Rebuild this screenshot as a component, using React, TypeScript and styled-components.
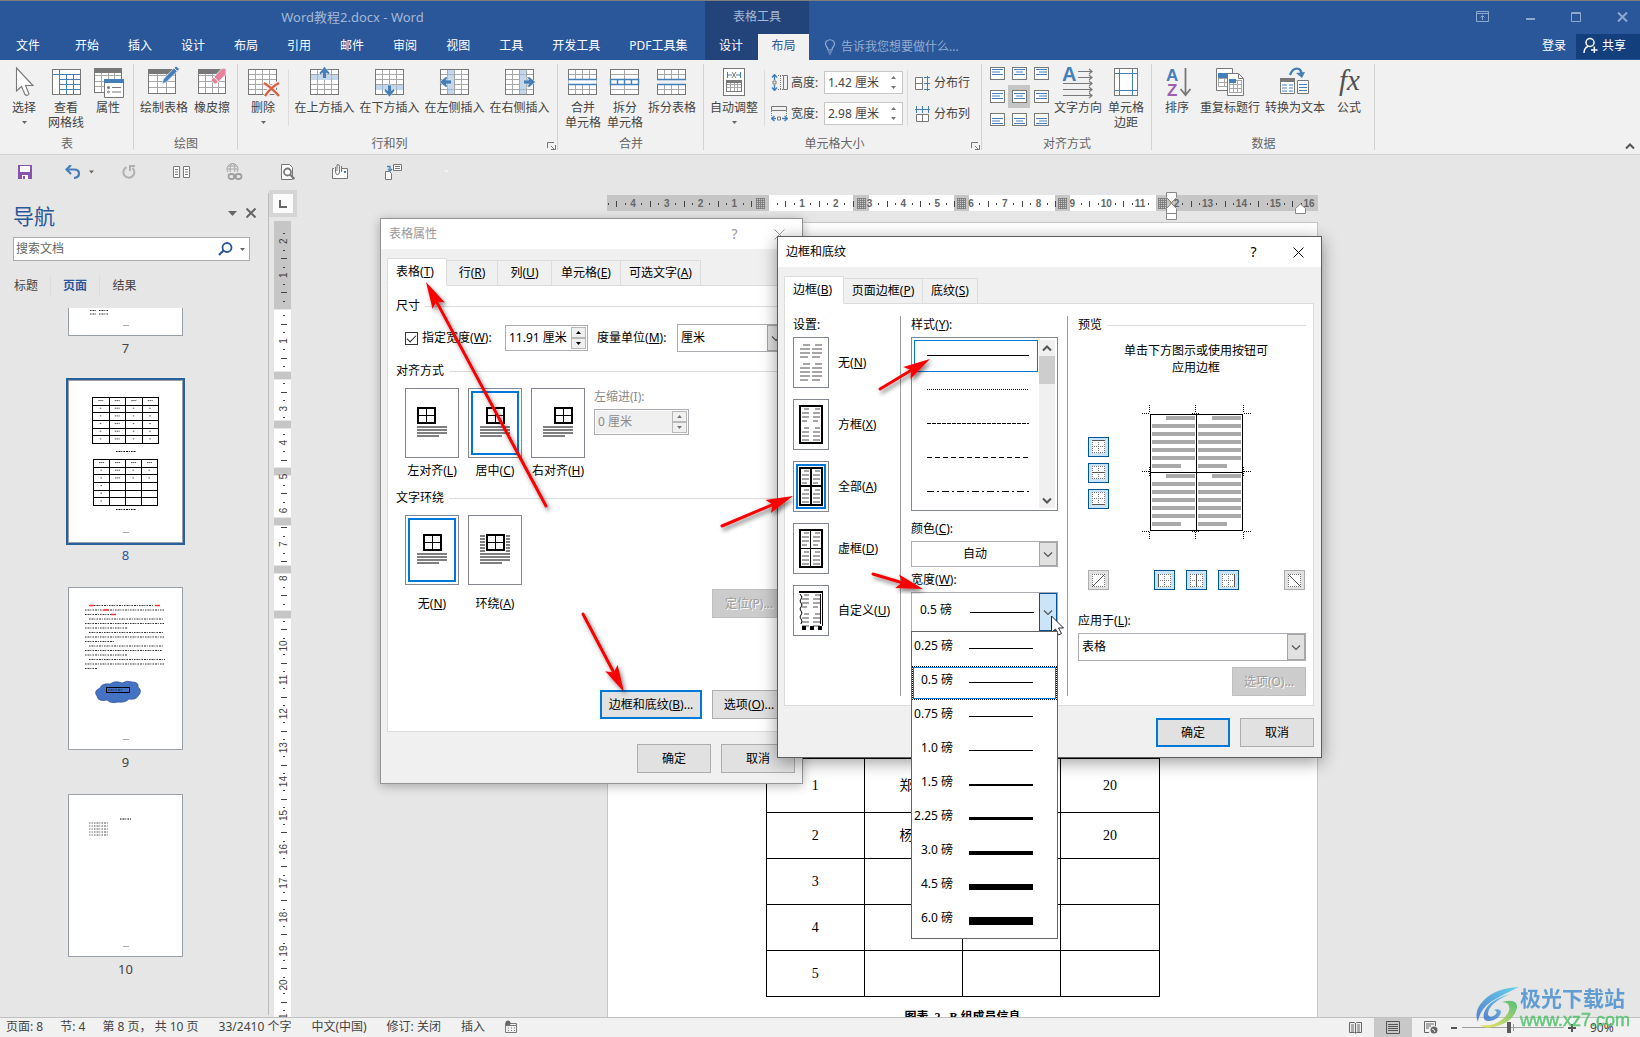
import React from "react";
import styled, { createGlobalStyle, css } from "styled-components";

const SANS = '"Noto Sans", "Noto Sans CJK SC", sans-serif';
const SERIF = '"Liberation Serif", "Noto Sans CJK SC", serif';
const BLUE = "#2a579a";
const ICON_GREY = "#787878";
const ICON_BLUE = "#447fb9";

const GlobalStyle = createGlobalStyle`
  *, *::before, *::after { box-sizing: border-box; }
  body { margin: 0; font: 12px/18px ${SANS}; color: #444; background: #e6e6e6; }
  button, input, select { font: inherit; color: inherit; margin: 0; padding: 0; border: 0; background: none; border-radius: 0; outline: 0; }
  button { white-space: nowrap; }
  select { appearance: none; }
  svg { display: block; flex: none; }
  ul { list-style: none; margin: 0; padding: 0; }
`;

const Shell = styled.div`
  position: relative;
  display: flex;
  flex-direction: column;
  height: 100vh;
  overflow: hidden;
  border-top: 1px solid #7e7e7e;
`;

/* ---------- header ---------- */
const Header = styled.header`
  display: grid;
  grid-template: 33px 26px / 705px 104px 1fr;
  background: ${BLUE};
  color: #fff;
`;
const DocTitle = styled.div<{ $ctx?: boolean }>`
  line-height: 32px;
  text-align: center;
  font-size: ${(p) => (p.$ctx ? 12 : 13)}px;
  color: #a5b8d6;
  background: ${(p) => (p.$ctx ? "#22447a" : "none")};
`;
const TabStrip = styled.nav<{ $ctx?: boolean }>`
  display: flex;
  background: ${(p) => (p.$ctx ? "#22447a" : "none")};
`;
const RibbonTab = styled.button<{ $active?: boolean; $file?: boolean }>`
  padding: 0 14px 2px;
  margin-right: 1px;
  line-height: 22px;
  ${(p) => p.$file && css`padding: 0 16px 2px; margin-right: 5px;`}
  ${(p) => p.$active && css`flex: 1; margin: 0; padding: 0 0 2px; background: #f1f1f1; color: ${BLUE};`}
`;
const WindowButtons = styled.div`
  display: flex;
  justify-content: flex-end;
  align-items: center;
  gap: 30px;
  padding: 0 10px 2px;
  color: #8fa8ce;
`;
const TabRight = styled.div`
  display: flex;
  align-items: stretch;
`;
const TellMe = styled.button`
  display: flex;
  align-items: center;
  gap: 5px;
  padding-left: 15px;
  margin-right: auto;
  color: #93abd0;
`;
const SignIn = styled.button`
  padding: 0 10px 2px;
  line-height: 22px;
`;
const Share = styled.button`
  display: flex;
  align-items: center;
  gap: 4px;
  width: 64px;
  padding: 0 0 2px 7px;
  margin-bottom: 1px;
  background: #133f7c;
  line-height: 20px;
`;

/* ---------- ribbon ---------- */
const Ribbon = styled.section`
  display: flex;
  height: 95px;
  background: #f1f1f1;
  border-bottom: 1px solid #d2d2d2;
`;
const Group = styled.div<{ $w: number }>`
  display: flex;
  flex-direction: column;
  justify-content: space-between;
  width: ${(p) => p.$w}px;
  padding-bottom: 1px;
  background: linear-gradient(#d2d2d2, #d2d2d2) no-repeat right 4px / 1px 86px;
`;
const GroupBody = styled.div`
  display: flex;
  padding-left: 4px;
`;
const GroupFoot = styled.div`
  display: flex;
  align-items: center;
  color: #666;
`;
const GroupName = styled.span`
  flex: 1;
  text-align: center;
`;
const Launcher = styled.button`
  width: 17px;
  padding: 5px 0 0 9px;
`;
const BigButton = styled.button<{ $w: number }>`
  display: flex;
  flex-direction: column;
  align-items: center;
  width: ${(p) => p.$w}px;
  padding-top: 6px;
  line-height: 15px;
`;
const BigLabel = styled.span`
  margin-top: 4px;
  min-height: 15px;
`;
const DownMark = styled.span`
  display: flex;
  align-items: center;
  height: 15px;
`;
const InnerRule = styled.span`
  width: 1px;
  height: 56px;
  margin: 10px 3px 0 4px;
  background: #dcdcdc;
`;
const SizeColumn = styled.div`
  display: flex;
  flex-direction: column;
  gap: 8px;
  padding: 11px 0 0 3px;
`;
const SizeRow = styled.div`
  display: flex;
  align-items: center;
  gap: 3px;
  height: 23px;
`;
const SizeLabel = styled.label`
  width: 30px;
  white-space: nowrap;
`;
const PlainButton = styled.button`
  display: flex;
  align-items: center;
  gap: 3px;
  height: 23px;
`;
const AlignGrid = styled.div`
  display: grid;
  grid-template-columns: repeat(3, 22px);
  grid-auto-rows: 23px;
  padding-top: 2px;
`;
const AlignCell = styled.button<{ $on?: boolean }>`
  display: grid;
  place-items: center;
  background: ${(p) => (p.$on ? "#c5c5c5" : "none")};
`;
const RibbonEnd = styled.div`
  display: flex;
  flex: 1;
  align-items: flex-end;
  justify-content: flex-end;
  padding: 0 5px 4px;
`;

const QuickBar = styled.div`
  display: flex;
  align-items: center;
  height: 33px;
  margin-bottom: -1px;
`;
const QuickButton = styled.button<{ $first?: boolean; $split?: boolean }>`
  display: flex;
  align-items: center;
  justify-content: center;
  width: ${(p) => (p.$first ? 49 : 53)}px;
  padding-left: ${(p) => (p.$split ? 9 : 0)}px;
`;

/* ---------- spin box and drop-down ---------- */
const SpinBox = styled.span<{ $w: number; $h: number; $flat?: boolean; $off?: boolean }>`
  display: flex;
  width: ${(p) => p.$w}px;
  height: ${(p) => p.$h}px;
  padding: 1px;
  border: 1px solid ${(p) => (p.$flat ? "#c6c6c6" : "#abadb3")};
  background: #fff;
  color: ${(p) => (p.$off ? "#8a8a8a" : p.$flat ? "#444" : "#000")};
  input { flex: 1; min-width: 0; padding-left: 2px; background: ${(p) => (p.$off ? "#f0f0f0" : "none")}; }
`;
const SpinButtons = styled.span<{ $flat?: boolean }>`
  display: flex;
  flex-direction: column;
  width: 15px;
  button { display: grid; flex: 1; place-items: center; ${(p) => !p.$flat && css`background: #f0f0f0; border: 1px solid #b8b8b8;`} }
`;
const DropBox = styled.span<{ $h: number; $hot?: boolean }>`
  position: relative;
  display: grid;
  grid-template-columns: 1fr 18px;
  height: ${(p) => p.$h}px;
  border: 1px solid #abadb3;
  background: #fff;
  color: #000;
  select { grid-area: 1 / 1 / 2 / 3; width: 100%; padding: 0 22px 0 3px; cursor: default; }
`;
const CenteredDrop = styled(DropBox)`
  select { text-align-last: center; }
`;
const DropArrow = styled.span<{ $hot?: boolean }>`
  grid-area: 1 / 2;
  display: grid;
  place-items: center;
  pointer-events: none;
  background: ${(p) => (p.$hot ? "#cce4f7" : "#e1e1e1")};
  border: 1px solid ${(p) => (p.$hot ? "#005499" : "#a5a5a5")};
`;

/* ---------- work area ---------- */
const Work = styled.main`
  display: flex;
  flex: 1;
  min-height: 0;
`;
const NavPane = styled.aside`
  display: flex;
  flex-direction: column;
  width: 269px;
  margin: 6px 0 2px;
  padding-top: 7px;
  border-right: 1px solid #bcbcbc;
`;
const NavHead = styled.div`
  display: flex;
  align-items: center;
  gap: 9px;
  padding: 0 12px 0 13px;
  height: 32px;
  button { padding-bottom: 6px; }
`;
const NavTitle = styled.h2`
  margin: 0 auto 0 0;
  font-size: 21px;
  font-weight: 400;
  color: ${BLUE};
`;
const SearchBox = styled.div`
  display: flex;
  align-items: center;
  gap: 7px;
  height: 24px;
  margin: 5px 18px 15px 13px;
  padding: 0 4px 0 2px;
  border: 1px solid #ababab;
  background: #fff;
  input { flex: 1; min-width: 0; }
  input::placeholder { color: #666; opacity: 1; }
`;
const NavTabs = styled.div`
  display: flex;
  height: 20px;
  margin-bottom: 12px;
  padding-left: 2px;
`;
const NavTab = styled.button<{ $on?: boolean }>`
  width: 49px;
  border-right: 1px solid #dcdcdc;
  color: ${(p) => (p.$on ? BLUE : "#444")};
  font-weight: ${(p) => (p.$on ? 700 : 400)};
  &:last-child { border: 0; }
`;
const ThumbView = styled.div`
  flex: 1;
  min-height: 0;
  overflow: hidden;
`;
const ThumbList = styled.ul`
  margin-top: -135px;
  padding-right: 17px;
`;
const ThumbItem = styled.li<{ $on?: boolean }>`
  display: flex;
  flex-direction: column;
  align-items: center;
  height: 207px;
  font-size: 13px;
  line-height: 24px;
  color: ${(p) => (p.$on ? BLUE : "#444")};
  button { height: 163px; width: 115px; border: 1px solid #9aa0aa; background: #fff; ${(p) => p.$on && css`outline: 2px solid #2a6099;`} }
`;
const RulerColumn = styled.div`
  display: flex;
  flex-direction: column;
  width: 28px;
  padding-top: 3px;
`;
const TabSelector = styled.button`
  display: grid;
  place-items: center;
  height: 27px;
  border: 4px solid #d5d5d5;
  background: #fbfbfb;
`;
const VRulerBox = styled.div`
  flex: 1;
  min-height: 0;
  margin: 4px 0 0 5px;
  overflow: hidden;
`;
const DocArea = styled.div`
  display: flex;
  flex: 1;
  flex-direction: column;
  align-items: center;
  padding: 8px 12px 0 0;
  min-width: 0;
`;
const Page = styled.article`
  flex: 1;
  min-height: 0;
  width: 711px;
  margin-top: 11px;
  padding-top: 535px;
  overflow: hidden;
  background: #fff;
  border: 1px solid #c6c6c6;
  border-bottom: 0;
  font-family: ${SERIF};
  color: #000;
`;
const DocTable = styled.table`
  width: 394px;
  margin: 0 auto;
  border-collapse: collapse;
  table-layout: fixed;
  font-size: 14px;
  td { height: 46px; padding: 0; border: 1px solid #000; text-align: center; }
  tr:first-child td { height: 54px; }
`;
const Caption = styled.p`
  margin: 11px 0 0;
  text-align: center;
  font-size: 12px;
  font-weight: 700;
  white-space: pre;
`;

/* ---------- status bar ---------- */
const StatusBar = styled.footer`
  display: flex;
  height: 20px;
  border-top: 1px solid #c0c0c0;
  background: #f1f1f1;
  padding: 0 22px 0 6px;
  line-height: 18px;
`;
const StatusItems = styled.div`
  display: flex;
  gap: 20px;
  margin-right: auto;
  white-space: nowrap;
  span:nth-child(-n + 2) { margin-right: -3px; }
`;
const ViewButton = styled.button<{ $on?: boolean }>`
  display: grid;
  place-items: center;
  width: 38px;
  background: ${(p) => (p.$on ? "#c8c8c8" : "none")};
`;
const ZoomButton = styled.button`
  display: grid;
  place-items: center;
  width: 8px;
`;
const ZoomRange = styled.input`
  appearance: none;
  width: 102px;
  margin: 0 4px;
  background: linear-gradient(#999, #999) no-repeat 51px center / 1px 7px, linear-gradient(#a0a0a0, #a0a0a0) no-repeat 0 center / 100% 1px;
  &::-webkit-slider-thumb { appearance: none; width: 4px; height: 11px; background: #5c5c5c; }
`;
const ZoomValue = styled.button`
  width: 28px;
  margin-left: 14px;
  text-align: left;
`;

/* ---------- dialogs ---------- */
const Dialog = styled.section<{ $x: number; $y: number; $w: number; $front?: boolean }>`
  position: absolute;
  left: ${(p) => p.$x}px;
  top: ${(p) => p.$y - 1}px;
  width: ${(p) => p.$w}px;
  border: 1px solid ${(p) => (p.$front ? "#5e5e5e" : "#949494")};
  background: #f0f0f0;
  color: #000;
  box-shadow: ${(p) => (p.$front ? "0 4px 16px rgba(0,0,0,.4)" : "0 2px 10px rgba(0,0,0,.28)")};
`;
const DialogBar = styled.div<{ $front?: boolean }>`
  display: flex;
  align-items: center;
  height: 30px;
  padding: 0 15px 0 8px;
  background: #fff;
  color: ${(p) => (p.$front ? "#000" : "#999")};
  font-size: 12px;
`;
const DialogTitle = styled.h3`
  margin: 0 auto 0 0;
  font-size: 12px;
  font-weight: 400;
`;
const BarButton = styled.button`
  display: grid;
  place-items: center;
  width: 45px;
  height: 18px;
  font-size: 14px;
  &:last-child { width: 16px; margin-left: 14px; }
`;
const DialogBody = styled.div`
  padding: 9px 7px 10px 6px;
`;
const DialogTabs = styled.div`
  display: flex;
  align-items: flex-end;
  height: 28px;
  margin-bottom: -1px;
`;
const DialogTab = styled.button<{ $w: number; $on?: boolean }>`
  width: ${(p) => p.$w}px;
  height: ${(p) => (p.$on ? 28 : 26)}px;
  border: 1px solid #dcdcdc;
  border-left-width: ${(p) => (p.$on ? 1 : 0)}px;
  ${(p) => p.$on && css`position: relative; background: #fff; border-bottom-color: #fff; padding: 0 6px 0 8px; text-align: left;`}
`;
const Panel = styled.div<{ $cols?: boolean }>`
  display: flex;
  flex-direction: ${(p) => (p.$cols ? "row" : "column")};
  padding: ${(p) => (p.$cols ? "12px 7px 9px 0" : "11px 8px 12px")};
  border: 1px solid #dcdcdc;
  background: #fff;
`;
const Legend = styled.div<{ $top?: number }>`
  display: flex;
  align-items: center;
  gap: 5px;
  margin-top: ${(p) => p.$top ?? 0}px;
  &::after { content: ""; flex: 1; height: 1px; background: #dcdcdc; }
`;
const FieldRow = styled.div`
  display: flex;
  align-items: center;
  margin: 9px 0 1px 9px;
  height: 28px;
  white-space: nowrap;
`;
const CheckLabel = styled.label`
  display: flex;
  align-items: center;
  gap: 4px;
  width: 100px;
`;
const CheckBox = styled.input`
  appearance: none;
  width: 13px;
  height: 13px;
  border: 1px solid #333;
  background: #fff;
  &:checked::after { content: ""; display: block; width: 9px; height: 5px; margin: 2px 1px; border: solid #222; border-width: 0 0 1px 1px; transform: rotate(-45deg); }
`;
const UnitLabel = styled.label`
  width: 80px;
  margin-left: 9px;
`;
const UnitDrop = styled.div`
  flex: 1;
`;
const ChoiceRow = styled.div<{ $tall?: boolean }>`
  display: flex;
  gap: 9px;
  padding-left: 9px;
  margin-top: 8px;
  min-height: ${(p) => (p.$tall ? 103 : 0)}px;
`;
const Choice = styled.label`
  display: flex;
  flex-direction: column;
  align-items: center;
  width: 54px;
  white-space: nowrap;
`;
const HiddenRadio = styled.input`
  appearance: none;
  position: absolute;
`;
const Tile = styled.span<{ $on?: boolean }>`
  border: 1px solid #838791;
  background: #fff;
  box-shadow: ${(p) => (p.$on ? "inset 0 0 0 2px #fff, inset 0 0 0 4px #0078d7" : "none")};
`;
const ChoiceText = styled.span<{ $far?: boolean }>`
  margin-top: ${(p) => (p.$far ? 10 : 4)}px;
`;
const IndentField = styled.div`
  display: flex;
  flex-direction: column;
  gap: 3px;
  color: #8a8a8a;
`;
const PushButton = styled.button<{ $w?: number; $main?: boolean; $end?: boolean }>`
  width: ${(p) => p.$w ?? 74}px;
  height: 29px;
  border: ${(p) => (p.$main ? "2px solid #0078d7" : "1px solid #adadad")};
  background: #e1e1e1;
  ${(p) => p.$end && css`margin-left: auto; align-self: flex-end;`}
  &:disabled { background: #ccc; border-color: #bfbfbf; color: #9c9c9c; text-shadow: 1px 1px #fff; }
`;
const ButtonRow = styled.div<{ $top: number }>`
  display: flex;
  justify-content: flex-end;
  gap: 10px;
  margin-top: ${(p) => p.$top}px;
`;
const SettingColumn = styled.div`
  display: flex;
  flex-direction: column;
  width: 116px;
  padding-left: 8px;
  border-right: 1px solid #a0a0a0;
`;
const SettingList = styled.div`
  display: flex;
  flex-direction: column;
  gap: 11px;
  margin-top: 3px;
`;
const Setting = styled.label`
  display: flex;
  align-items: center;
  gap: 9px;
`;
const StyleColumn = styled.div`
  display: flex;
  flex-direction: column;
  width: 167px;
  padding: 0 9px 0 10px;
  border-right: 1px solid #a0a0a0;
`;
const PreviewColumn = styled.div`
  display: flex;
  flex: 1;
  flex-direction: column;
  padding-left: 10px;
`;
const StyleList = styled.div`
  display: flex;
  justify-content: space-between;
  height: 174px;
  margin: 3px 0 9px;
  padding: 2px;
  border: 1px solid #838791;
`;
const StyleItems = styled.ul`
  display: flex;
  flex-direction: column;
  gap: 2px;
`;
const StyleItem = styled.li<{ $on?: boolean }>`
  display: grid;
  place-items: center;
  width: 124px;
  height: 32px;
  padding: 0 0 1px 4px;
  border: 1px solid ${(p) => (p.$on ? "#0078d7" : "transparent")};
`;
const ScrollBar = styled.div`
  display: flex;
  flex-direction: column;
  justify-content: space-between;
  width: 16px;
  background: #f0f0f0;
  button { display: grid; place-items: center; height: 16px; }
`;
const ScrollThumb = styled.span`
  height: 28px;
  margin-bottom: auto;
  background: #cdcdcd;
`;
const FieldName = styled.label<{ $gap?: boolean }>`
  margin: ${(p) => (p.$gap ? 4 : 0)}px 0 3px;
`;
const WidthLine = styled.span`
  grid-area: 1 / 1;
  align-self: center;
  justify-self: end;
  width: 64px;
  height: 1px;
  margin-right: 5px;
  background: #000;
`;
const WidthDrop = styled(DropBox)`
  select { padding: 0 60px 5px 8px; }
`;
const WidthList = styled.ul`
  position: absolute;
  z-index: 2;
  top: 38px;
  left: -1px;
  width: 147px;
  border: 1px solid #646464;
  background: #fff;
`;
const WidthOption = styled.li<{ $on?: boolean }>`
  display: flex;
  gap: 16px;
  height: 34px;
  line-height: 26px;
  border: 1px dotted ${(p) => (p.$on ? "#000" : "transparent")};
  box-shadow: ${(p) => (p.$on ? "inset 0 0 0 1px #0078d7" : "none")};
  span { width: 40px; display: flex; justify-content: flex-end; white-space: nowrap; }
`;
const Stroke = styled.i<{ $t: number }>`
  width: 64px;
  height: ${(p) => p.$t}px;
  margin-top: ${(p) => 16 - Math.ceil(p.$t / 2)}px;
  background: #000;
`;
const Hint = styled.p`
  margin: 8px 0 28px;
  padding-left: 8px;
  line-height: 17px;
  text-align: center;
`;
const PreviewRow = styled.div`
  display: flex;
  align-items: center;
  gap: 32px;
  padding-left: 10px;
`;
const SideButtons = styled.div`
  display: flex;
  flex-direction: column;
  gap: 6px;
`;
const BottomButtons = styled.div`
  display: flex;
  justify-content: space-between;
  margin: 29px 1px 22px 10px;
`;
const MiddleButtons = styled.div`
  display: flex;
  gap: 11px;
`;
const EdgeButton = styled.button<{ $on?: boolean }>`
  display: grid;
  place-items: center;
  width: 21px;
  height: 20px;
  border: 1px solid ${(p) => (p.$on ? "#005499" : "#adadad")};
  background: ${(p) => (p.$on ? "#cce4f7" : "#e1e1e1")};
`;

/* ---------- overlays ---------- */
const Marks = styled.svg`
  position: absolute;
  left: 0;
  top: -1px;
  pointer-events: none;
`;
const Watermark = styled.div`
  position: absolute;
  right: 10px;
  bottom: 7px;
  display: flex;
  gap: 1px;
  pointer-events: none;
  opacity: 0.85;
`;
const WatermarkText = styled.div`
  display: flex;
  flex-direction: column;
  font: 700 21px/24px ${SANS};
  color: #4a90d0;
`;
const WatermarkSite = styled.span`
  font: 400 18px/20px "Liberation Sans", sans-serif;
  color: #4fc06a;
  -webkit-text-stroke: 0.5px #4fc06a;
`;

/* ---------- icon pieces ---------- */
type GridProps = { x?: number; y?: number; w?: number; h?: number; c?: number; r?: number; frame?: string; line?: string; fill?: string };
const Grid = ({ x = 1.5, y = 3.5, w = 28, h = 25, c = 4, r = 5, frame = ICON_GREY, line = "#a8a8a8", fill = "#fff" }: GridProps) => {
  let d = "";
  for (let i = 1; i < c; i++) d += `M${x + Math.round((w / c) * i)} ${y}v${h}`;
  for (let i = 1; i < r; i++) d += `M${x} ${y + Math.round((h / r) * i)}h${w}`;
  return (
    <>
      <rect x={x} y={y} width={w} height={h} fill={fill} />
      <path d={d} stroke={line} fill="none" />
      <rect x={x} y={y} width={w} height={h} fill="none" stroke={frame} />
    </>
  );
};
const Icon = ({ children, w = 32, h = 30 }: { children: React.ReactNode; w?: number; h?: number }) => (
  <svg width={w} height={h} viewBox={`0 0 ${w} ${h}`} overflow="visible" aria-hidden="true">{children}</svg>
);
const Tri = ({ up, w = 5, color = "#666" }: { up?: boolean; w?: number; color?: string }) => (
  <svg width={w} height={Math.ceil(w / 2)} viewBox={`0 0 ${w} ${Math.ceil(w / 2)}`}>
    <path d={up ? `M0 ${Math.ceil(w / 2)}L${w / 2} 0L${w} ${Math.ceil(w / 2)}z` : `M0 0L${w / 2} ${Math.ceil(w / 2)}L${w} 0z`} fill={color} />
  </svg>
);
const Chevron = ({ up, bold, color = "#555" }: { up?: boolean; bold?: boolean; color?: string }) => (
  <svg width="10" height="7" viewBox="0 0 10 7">
    <path d={up ? "M1 5.5L5 1.5L9 5.5" : "M1 1.5L5 5.5L9 1.5"} fill="none" stroke={color} strokeWidth={bold ? 2 : 1.2} />
  </svg>
);
const Cross = ({ size = 10, color = "currentColor", width = 1 }: { size?: number; color?: string; width?: number }) => (
  <svg width={size} height={size} viewBox="0 0 10 10">
    <path d="M.5.5l9 9M9.5.5l-9 9" stroke={color} strokeWidth={width * (10 / size)} />
  </svg>
);
const ArrowUp = ({ x, y, turn = 0 }: { x: number; y: number; turn?: number }) => (
  <path transform={`translate(${x} ${y}) rotate(${turn})`} d="M0 -6L5 0V3L2 0.5V6H-2V0.5L-5 3V0z" fill={ICON_BLUE} stroke="#f1f1f1" strokeWidth="0.6" />
);

const icons = {
  select: <Icon><path d="M8.500 2V25L13.500 20.500L17 28.500Q19 30.500 21 28L17.500 19.500H25z" fill="#fff" stroke={ICON_GREY} strokeWidth="1.100" /></Icon>,
  gridlines: (
    <Icon>
      <rect x="2.500" y="3.500" width="28" height="25" fill="#fff" stroke={ICON_GREY} />
      <path d="M9.500 4V28M3 8.500H30M16.500 8V28M23.500 8V28M9 13.500H30M9 18.500H30M9 23.500H30" stroke={ICON_BLUE} fill="none" />
    </Icon>
  ),
  props: (
    <Icon>
      <Grid x={2.5} y={3.5} w={27} h={23} c={4} r={4} />
      <path d="M2 2h28v5H2z" fill={ICON_GREY} />
      <path d="M12.500 13.500h19v18h-19z" fill="#fff" stroke={ICON_GREY} />
      <path d="M12 13h20v4H12z" fill={ICON_BLUE} />
      <path d="M20 21.500h9M20 26h9" stroke={ICON_GREY} />
      <circle cx="16.500" cy="21.500" r="1.500" fill={ICON_GREY} /><circle cx="16.500" cy="26" r="1" fill="none" stroke={ICON_GREY} />
    </Icon>
  ),
  draw: (
    <Icon>
      <Grid x={0.5} y={3.5} w={27} h={24} c={3} r={4} />
      <path d="M0 3h28v5H0z" fill={ICON_GREY} />
      <path d="M14 18l1.500-5L28 0l3.500 3L18.500 16z" fill={ICON_BLUE} stroke="#f1f1f1" strokeWidth=".7" />
      <path d="M26 2l3.500 3.500" stroke="#f1f1f1" />
    </Icon>
  ),
  eraser: (
    <Icon>
      <Grid x={2.5} y={3.5} w={27} h={24} c={4} r={4} />
      <path d="M2 3h28v5H2z" fill={ICON_GREY} />
      <path d="M15 14L26 2.500Q28 1.500 30 3V8.500L20 18Q17 18 15 14z" fill="#e8829a" stroke="#f1f1f1" strokeWidth=".8" />
      <path d="M18 11l4.500 5" stroke="#fff" />
    </Icon>
  ),
  remove: (
    <Icon>
      <Grid c={4} />
      <path d="M17 18Q24 21 32 30M32 17Q24 21 18 31" stroke="#f1f1f1" strokeWidth="5" fill="none" />
      <path d="M17 17Q24 21 32 30M32 17Q24 21 18 30" stroke="#d86344" strokeWidth="2.500" fill="none" />
    </Icon>
  ),
  above: <Icon><Grid /><path d="M2 9h27v5H2z" fill="#c3d6ea" /><path d="M8.500 9v5M22.500 9v5" stroke="#9bb6d3" /><ArrowUp x={15.5} y={6.5} /></Icon>,
  below: <Icon><Grid /><path d="M2 19h27v5H2z" fill="#c3d6ea" /><path d="M8.500 19v5M22.500 19v5" stroke="#9bb6d3" /><ArrowUp x={15.5} y={25} turn={180} /></Icon>,
  left: <Icon><Grid /><path d="M9 4h6v24H9z" fill="#c3d6ea" /><path d="M9 8.500h6M9 23.500h6" stroke="#9bb6d3" /><ArrowUp x={6.5} y={16} turn={-90} /></Icon>,
  right: <Icon><Grid /><path d="M16 4h6v24h-6z" fill="#c3d6ea" /><path d="M16 8.500h6M16 23.500h6" stroke="#9bb6d3" /><ArrowUp x={25.5} y={16} turn={90} /></Icon>,
  merge: <Icon><Grid /><path d="M1.500 13.500h28v5h-28z" fill="#fff" /><path d="M1 13.500h29M1 18.500h29" stroke={ICON_BLUE} strokeWidth="1.400" /></Icon>,
  split: <Icon><Grid c={2} /><path d="M1.500 13.500h28v5h-28z" fill="#fff" stroke={ICON_BLUE} strokeWidth="1.400" /><path d="M8.500 13v5M15.500 13v5M22.500 13v5" stroke={ICON_BLUE} strokeWidth="1.400" /></Icon>,
  splitTable: <Icon><Grid h={10} r={2} /><Grid y={18.5} h={10} r={2} /><path d="M1 14h29v4H1z" fill="#f1f1f1" /><path d="M1 13.500h29M1 18.500h29" stroke={ICON_BLUE} strokeWidth="1.400" /></Icon>,
  autofit: (
    <Icon>
      <rect x="5.500" y="2.500" width="21" height="27" fill="#fff" stroke={ICON_GREY} />
      <path d="M9.500 6v6M22.500 6v6M10 9h4M22 9h-4" stroke={ICON_BLUE} /><path d="M14 6l4 6M18 6l-4 6" stroke={ICON_GREY} />
      <Grid x={8.5} y={14.5} w={15} h={11} c={4} r={3} /><path d="M8 14h16v3H8z" fill={ICON_GREY} />
    </Icon>
  ),
  direction: (
    <Icon w={34}>
      <text x="1" y="15" fontSize="20" fontFamily="Liberation Sans, sans-serif" fontWeight="700" fill={ICON_BLUE}>A</text>
      <path d="M17 5.500h14M17 11.500h14M2 17.500h29M2 23.500h29M2 29.500h29M28 3l3 2.500L28 8M28 9l3 2.500L28 14M28 15l3 2.500L28 20M28 21l3 2.500L28 26M28 27l3 2.500L28 32" stroke={ICON_GREY} fill="none" strokeWidth="1.200" />
    </Icon>
  ),
  margins: <Icon><rect x="4.500" y="2.500" width="23" height="27" fill="#fff" stroke={ICON_GREY} /><path d="M9.500 3v26M22.500 3v26M5 7.500h22M5 24.500h22" stroke={ICON_BLUE} /></Icon>,
  sort: (
    <Icon>
      <g fontFamily="Liberation Sans, sans-serif" fontSize="17" fontWeight="700"><text x="5" y="15" fill={ICON_BLUE}>A</text><text x="6" y="30" fill="#9d5fb5">Z</text></g>
      <path d="M24.500 2V28M19.500 23L24.500 29L29.500 23" stroke={ICON_GREY} strokeWidth="1.800" fill="none" />
    </Icon>
  ),
  headings: (
    <Icon>
      <path d="M2.500 2.500h16v22h-16z" fill="#fff" stroke={ICON_GREY} /><Grid x={4.5} y={8.5} w={12} h={12} c={2} r={3} frame="#a8a8a8" /><path d="M4 7h13v5H4z" fill={ICON_BLUE} />
      <path d="M13.500 7.500h11l5 5v17h-16z" fill="#fff" stroke={ICON_GREY} /><Grid x={15.5} y={14.5} w={12} h={12} c={3} r={3} frame="#a8a8a8" /><path d="M15 13h7v4h-7z" fill={ICON_BLUE} /><path d="M24.500 8v4.500H29" fill="none" stroke={ICON_GREY} />
    </Icon>
  ),
  toText: (
    <Icon>
      <path d="M11 9Q14 1 20 3Q23 5 22.500 9" stroke={ICON_BLUE} strokeWidth="2.200" fill="none" /><path d="M17 7l6 5 3-6z" fill={ICON_BLUE} />
      <path d="M1.500 13.500h14v14h-14z" fill="#fff" stroke={ICON_GREY} /><path d="M1 12h15v4H1z" fill={ICON_GREY} /><path d="M3 19h5M10 19h4M3 22h5M10 22h4M3 25h5M10 25h4" stroke={ICON_BLUE} />
      <path d="M18.500 14.500h11v13h-11z" fill="#fff" stroke={ICON_GREY} /><path d="M20 18.500h8M20 21.500h8M20 24.500h8" stroke={ICON_BLUE} />
    </Icon>
  ),
  formula: <Icon><text x="6" y="24" fontSize="29" fontStyle="italic" fontFamily="Liberation Serif, serif" fill="#505050">fx</text></Icon>,
};

const BigTool = ({ w, icon, label, drop }: { w: number; icon: keyof typeof icons; label: string[]; drop?: boolean }) => (
  <BigButton $w={w}>
    {icons[icon]}
    <BigLabel>{label.map((l, i) => <React.Fragment key={l}>{i > 0 && <br />}{l}</React.Fragment>)}</BigLabel>
    {drop && <DownMark><Tri /></DownMark>}
  </BigButton>
);

const RibbonGroup = ({ w, name, launcher, children }: { w: number; name: string; launcher?: boolean; children: React.ReactNode }) => (
  <Group $w={w}>
    <GroupBody>{children}</GroupBody>
    <GroupFoot>
      <GroupName>{name}</GroupName>
      {launcher && (
        <Launcher aria-label={name}>
          <svg width="8" height="8" viewBox="0 0 8 8" overflow="visible"><path d="M-2.500 5V-.5H4M1 3l3 3M5.500 2v4.500H1" fill="none" stroke="#777" /></svg>
        </Launcher>
      )}
    </GroupFoot>
  </Group>
);

const Spin = ({ id, value, w, h, flat, off }: { id: string; value: string; w: number; h: number; flat?: boolean; off?: boolean }) => (
  <SpinBox $w={w} $h={h} $flat={flat} $off={off}>
    <input id={id} defaultValue={value} disabled={off} />
    <SpinButtons $flat={flat}>
      <button tabIndex={-1} aria-label="增加" disabled={off}><Tri up color={flat || off ? "#777" : "#000"} /></button>
      <button tabIndex={-1} aria-label="减少" disabled={off}><Tri color={flat || off ? "#777" : "#000"} /></button>
    </SpinButtons>
  </SpinBox>
);

const Key = ({ t, k, end = "" }: { t: string; k: string; end?: string }) => <>{t}(<u>{k}</u>){end}</>;

const AlignIcon = ({ row, col }: { row: number; col: number }) => {
  const y = [2.5, 3.5, 5.5][row];
  const xs = [[2, 2, 2], [2, 4, 2], [2, 5, 2]][col];
  const ws = [[11, 8, 11], [11, 7, 11], [11, 8, 11]][col];
  return (
    <svg width="15" height="13" viewBox="0 0 15 13">
      <rect x=".5" y=".5" width="14" height="12" fill="#fff" stroke={ICON_GREY} />
      {xs.map((x, i) => <path key={i} d={`M${x} ${y + i * 2.5}h${ws[i]}`} stroke={ICON_BLUE} />)}
    </svg>
  );
};

/* ---------- rulers ---------- */
const V_BANDS: [number, number, string][] = [
  [0, 88, "#c6c6c6"], [89, 61, "#fff"], [151, 7, "#c6c6c6"], [159, 40, "#fff"], [200, 7, "#c6c6c6"], [208, 38, "#fff"], [247, 7, "#c6c6c6"],
  [255, 41, "#fff"], [297, 7, "#c6c6c6"], [305, 39, "#fff"], [345, 7, "#c6c6c6"], [353, 36, "#fff"], [390, 7, "#c6c6c6"], [398, 1200, "#fff"],
];
const vClear = (y: number, pad: number) => !V_BANDS.some(([s, l, c], i) => i > 0 && c !== "#fff" && y > s - pad && y < s + l + pad);
const VRuler = () => {
  const marks: React.ReactNode[] = [];
  for (let q = -9; q < 110; q++) {
    const y = (q < 0 ? 88 : 86) + (q * 33.9) / 4;
    if (y < 4 || q === 0) continue;
    if (q % 4 === 0) {
      if (vClear(y, 1)) marks.push(<text key={q} transform={`translate(13 ${y}) rotate(-90)`} textAnchor="middle">{Math.abs(q / 4)}</text>);
    } else if (vClear(y, 1)) {
      marks.push(<path key={q} d={q % 2 === 0 ? `M7 ${Math.round(y) + 0.5}h6` : `M9 ${Math.round(y) + 0.5}h2`} stroke="#444" />);
    }
  }
  return (
    <svg width="17" height="1600" viewBox="0 0 17 1600" fontFamily="Liberation Sans, sans-serif" fontSize="10" fill="#444">
      {V_BANDS.map(([y, h, c]) => <rect key={y} y={y} width="17" height={h} fill={c} />)}
      {marks}
    </svg>
  );
};

const H_BANDS = [[162, 84], [262, 85], [362, 86], [463, 86]];
const H_STOPS = [149, 250, 350, 451, 551];
const HRuler = () => {
  const marks: React.ReactNode[] = [];
  for (let q = -19; q < 66; q++) {
    const x = 161.2 + (q * 33.8) / 4;
    if (x < 0 || x > 710 || q === 0 || H_STOPS.some((s) => x > s - 2 && x < s + 12)) continue;
    if (q % 4 === 0) marks.push(<text key={q} x={x} y="12" textAnchor="middle">{Math.abs(q / 4)}</text>);
    else marks.push(<path key={q} d={q % 2 === 0 ? `M${Math.round(x) + 0.5} 6v6` : `M${Math.round(x) + 0.5} 8v2`} stroke="#444" />);
  }
  return (
    <svg width="711" height="16" viewBox="0 0 711 16" overflow="visible" fontFamily="Liberation Sans, sans-serif" fontSize="10" fontWeight="700" fill="#666">
      <rect width="711" height="16" fill="#c6c6c6" />
      {H_BANDS.map(([x, w]) => <rect key={x} x={x} width={w} height="16" fill="#fff" />)}
      {marks}
      {H_STOPS.map((x) => (
        <g key={x}><rect x={x} y="3" width="10" height="11" fill="#c6c6c6" /><path d={`M${x + 0.5} 3v11M${x + 2.5} 3v11M${x + 4.5} 3v11M${x + 6.5} 3v11M${x + 8.5} 3v11M${x} 3.500h9M${x} 5.500h9M${x} 7.500h9M${x} 9.500h9M${x} 11.500h9M${x} 13.500h9`} stroke="#777" strokeWidth=".8" /></g>
      ))}
      <g fill="#fff" stroke="#888">
        <path d="M559.500 -2.500h10v5l-5 5l-5-5z" /><path d="M559.500 18.500v-5l5-5l5 5v5z" /><path d="M559.500 18.500h10v6h-10z" />
        <path d="M688.500 18.500v-5l5-4.500l5 4.500v5z" />
      </g>
    </svg>
  );
};

/* ---------- page thumbnails ---------- */
const MiniTable = ({ x, y, w, h, filled }: { x: number; y: number; w: number; h: number; filled: number }) => {
  const rows = 6;
  const out: React.ReactNode[] = [];
  for (let r = 0; r < rows; r++)
    for (let c = 0; c < 4; c++) {
      if (r >= filled && c > 0) continue;
      const cx = x + (w / 4) * (c + 0.5);
      const cy = y + (h / rows) * (r + 0.4);
      const half = r === 0 || c === 1 ? 2.5 : 1;
      out.push(<path key={`${r}${c}`} d={`M${cx - half} ${cy}h${half * 2}`} stroke="#555" strokeDasharray="1.500 .5" />);
    }
  return <><Grid x={x} y={y} w={w} h={h} c={4} r={rows} frame="#000" line="#000" />{out}</>;
};
const TextRun = ({ x, y, w, color = "#333" }: { x: number; y: number; w: number; color?: string }) => (
  <path d={`M${x} ${y}h${w}`} stroke={color} strokeWidth="1.200" strokeDasharray="1.500 1 2 .8 1 1.200" />
);
const Foot = () => <path d="M54 151.500h6" stroke="#aaa" />;
const thumbs: Record<number, React.ReactNode> = {
  7: <>{[129, 133, 136.5, 140].map((y) => <g key={y}><TextRun x={21} y={y} w={6} /><TextRun x={30} y={y} w={10} /></g>)}</>,
  8: (
    <>
      <MiniTable x={23.5} y={16.5} w={66} h={46} filled={6} /><TextRun x={47} y={70.5} w={20} color="#000" />
      <MiniTable x={24.5} y={78.5} w={64} h={46} filled={3} /><TextRun x={47} y={128.5} w={20} color="#000" />
    </>
  ),
  9: (
    <>
      {[[25, 60], [16, 79], [16, 30], [20, 75], [16, 79], [16, 43], [20, 75], [16, 79], [16, 30], [20, 75], [16, 77], [16, 42], [20, 76], [16, 79], [16, 12]].map(([x, w], i) => (
        <TextRun key={i} x={x} y={17.5 + i * 4.5} w={w} />
      ))}
      <path d="M20 17.500h5M86 17.500h5M35 22h5M42 26.500h5" stroke="#f33" strokeWidth="1.500" />
      <path d="M28 108Q24 103 31 100Q33 95 41 96Q46 92 53 95Q58 92 63 94Q70 94 69 99Q74 103 69 108Q67 112 60 111Q56 115 49 114Q42 116 38 112Q29 114 28 108z" fill="#4472c4" stroke="#2f528f" strokeWidth=".7" />
      <rect x="37.500" y="99.500" width="23" height="5" fill="#4472c4" stroke="#000" /><TextRun x={39} y={102} w={14} color="#123" />
    </>
  ),
  10: <><TextRun x={51} y={24} w={11} color="#000" />{[28, 31, 34, 37, 40].map((y) => <g key={y}><TextRun x={20} y={y} w={4} color="#777" /><TextRun x={25} y={y} w={15} color="#555" /></g>)}</>,
};

/* ---------- dialog drawings ---------- */
const TableGlyph = ({ x }: { x: number }) => (
  <g shapeRendering="crispEdges"><rect x={x + 1} y="20" width="17" height="15" fill="#fff" stroke="#000" strokeWidth="2" /><path d={`M${x + 9.5} 20v15M${x + 1} 27.500h17`} stroke="#000" /></g>
);
const AlignTile = ({ x, wrap }: { x: number; wrap?: boolean }) => (
  <svg width="52" height="68" viewBox="1 1 52 68">
    <path d="M12 39h30M12 42h30M12 45h30M12 48h22" stroke="#7f7f7f" strokeWidth="2" />
    {wrap && <path d="M12 21h5M12 24h5M12 27h5M12 30h5M12 33h5M12 36h5M38 21h4M38 24h4M38 27h4M38 30h4M38 33h4M38 36h4" stroke="#7f7f7f" strokeWidth="2" />}
    <TableGlyph x={x} />
  </svg>
);
const SettingTile = ({ kind }: { kind: number }) => (
  <svg width="34" height="49" viewBox="1 1 34 49">
    {[8, 12, 16, 20, 27, 31, 35, 39, 43].map((y, i) => {
      const first = i === 0 || i === 4;
      const last = i === 3 || i === 8;
      const boxed = kind > 0;
      if (boxed && i === 8) return null;
      const run = (base: number) => `M${base + (first ? (boxed ? 2 : 3) : 0)} ${y + (boxed ? 2 : 0)}h${(boxed ? 7 : 10) - (last ? 2 : 0) - (first ? (boxed ? 2 : 3) : 0)}`;
      return <path key={y} d={run(boxed ? 9 : 7) + run(boxed ? 20 : 19)} stroke="#a6a6a6" strokeWidth="2" />;
    })}
    <g fill="none" stroke="#000" shapeRendering="crispEdges">
      {kind >= 1 && kind <= 3 && <rect x="7" y="7" width="22" height="37" strokeWidth="2" />}
      {kind === 2 && <path d="M18 7v37M7 25h22" strokeWidth="2" />}
      {kind === 3 && <path d="M17.500 7v37M7 25.500h22" />}
    </g>
    {kind === 4 && (
      <g fill="none" stroke="#000">
        <path d="M6 7h24" strokeWidth="2" /><path d="M29.500 7v34M27.500 9v30" /><path d="M7 9l2 3l-2 4l2 4l-2 4l2 4l-2 4l2 4l-1 3" />
        <path d="M9 43h22" strokeWidth="4" strokeDasharray="4 4" />
      </g>
    )}
  </svg>
);
const Preview = () => (
  <svg width="111" height="137" viewBox="0 0 111 137" shapeRendering="crispEdges">
    {[0, 1].map((r) => [0, 1].map((c) => [0, 1, 2, 3, 4, 5, 6].map((i) => {
      const x = 11 + c * 46 + (i === 0 ? 14 : 0);
      return <rect key={`${r}${c}${i}`} x={x} y={12 + r * 58 + i * 8} width={i === 0 || i === 6 ? 29 : 43} height="4" fill="#a9a9a9" />;
    })))}
    <path d="M9.500 10.500h92v116h-92zM55.500 10v116M9 68.500h92" fill="none" stroke="#000" />
    <path d="M1 9.500h8M103 9.500h8M8.500 1v8M54.500 1v8M102.500 1v8M1 67.500h8M103 67.500h8M1 127.500h8M103 127.500h8M8.500 128v8M54.500 128v8M102.500 128v8M8.500 63v9M102.500 63v9M51 9.500h8M51 127.500h8" stroke="#000" strokeDasharray="1 1" />
  </svg>
);
const edgePaths: Record<string, string> = { top: "M0 .5h13", midH: "M0 6.500h13", bottom: "M0 12.500h13", left: "M.5 0v13", midV: "M6.500 0v13", right: "M12.500 0v13", up: "M0 13L13 0", down: "M0 0L13 13" };
const Edge = ({ kind }: { kind: string }) => {
  const diag = kind === "up" || kind === "down";
  return (
    <EdgeButton $on={!diag} aria-label={kind}>
      <svg width="13" height="13" viewBox="0 0 13 13">
        <rect width="13" height="13" fill="#fff" />
        <path d={"M0 .5h13M0 12.500h13M.5 0v13M12.500 0v13" + (diag ? "" : "M6.500 0v13M0 6.500h13")} stroke="#777" strokeDasharray="1 1" />
        <path d={edgePaths[kind]} stroke="#555" />
      </svg>
    </EdgeButton>
  );
};

/* ---------- annotation arrows ---------- */
const arrows = [
  [546, 506, 426, 282], [583, 614, 624, 692], [722, 526, 793, 496], [880, 389, 930, 359], [873, 574, 923, 589],
];
const RedArrow = ({ p }: { p: number[] }) => {
  const [x1, y1, x2, y2] = p;
  const a = Math.atan2(y2 - y1, x2 - x1);
  const at = (back: number, side: number) => `${x2 - Math.cos(a) * back - Math.sin(a) * side} ${y2 - Math.sin(a) * back + Math.cos(a) * side}`;
  return (
    <g filter="url(#drop)">
      <path d={`M${x1} ${y1}L${at(20, 0)}`} stroke="#fb0404" strokeWidth="3" strokeLinecap="round" />
      <path d={`M${at(0, 0)}L${at(27, 7)}L${at(22, 0)}L${at(27, -7)}z`} fill="#fb0404" />
    </g>
  );
};

const styleDashes = ["", "1 1", "4 1", "5 3", "7 3 2 3"];
const widths: [string, number][] = [["0.25", 1], ["0.5", 1], ["0.75", 1], ["1.0", 1], ["1.5", 2], ["2.25", 3], ["3.0", 4], ["4.5", 6], ["6.0", 8]];
const mainTabs = ["开始", "插入", "设计", "布局", "引用", "邮件", "审阅", "视图", "工具", "开发工具", "PDF工具集"];

const TableProperties = () => (
  <Dialog $x={380} $y={218} $w={423} role="dialog" aria-label="表格属性">
    <DialogBar>
      <DialogTitle>表格属性</DialogTitle>
      <BarButton>?</BarButton>
      <BarButton aria-label="关闭"><Cross size={11} /></BarButton>
    </DialogBar>
    <DialogBody>
      <DialogTabs role="tablist">
        <DialogTab $w={60} $on role="tab"><Key t="表格" k="T" /></DialogTab>
        <DialogTab $w={51} role="tab"><Key t="行" k="R" /></DialogTab>
        <DialogTab $w={54} role="tab"><Key t="列" k="U" /></DialogTab>
        <DialogTab $w={69} role="tab"><Key t="单元格" k="E" /></DialogTab>
        <DialogTab $w={80} role="tab"><Key t="可选文字" k="A" /></DialogTab>
      </DialogTabs>
      <Panel>
        <Legend>尺寸</Legend>
        <FieldRow>
          <CheckLabel><CheckBox type="checkbox" defaultChecked /><span><Key t="指定宽度" k="W" end=":" /></span></CheckLabel>
          <Spin id="tbl-width" value="11.91 厘米" w={83} h={26} />
          <UnitLabel htmlFor="unit"><Key t="度量单位" k="M" end=":" /></UnitLabel>
          <UnitDrop>
            <DropBox $h={28}><select id="unit"><option>厘米</option></select><DropArrow><Chevron /></DropArrow></DropBox>
          </UnitDrop>
        </FieldRow>
        <Legend $top={9}>对齐方式</Legend>
        <ChoiceRow>
          {[["左对齐", "L", 12], ["居中", "C", 18], ["右对齐", "H", 23]].map(([t, k, x], i) => (
            <Choice key={k}>
              <HiddenRadio type="radio" name="align" defaultChecked={i === 1} />
              <Tile $on={i === 1}><AlignTile x={x as number} /></Tile>
              <ChoiceText><Key t={t as string} k={k as string} /></ChoiceText>
            </Choice>
          ))}
          <IndentField>
            <label htmlFor="indent">左缩进(I):</label>
            <Spin id="indent" value="0 厘米" w={95} h={26} off />
          </IndentField>
        </ChoiceRow>
        <Legend $top={9}>文字环绕</Legend>
        <ChoiceRow $tall>
          {[["无", "N"], ["环绕", "A"]].map(([t, k], i) => (
            <Choice key={k}>
              <HiddenRadio type="radio" name="wrap" defaultChecked={i === 0} />
              <Tile $on={i === 0}><AlignTile x={18} wrap={i === 1} /></Tile>
              <ChoiceText $far><Key t={t} k={k} /></ChoiceText>
            </Choice>
          ))}
          <PushButton disabled $end>定位(P)...</PushButton>
        </ChoiceRow>
        <ButtonRow $top={72}>
          <PushButton $w={102} $main><Key t="边框和底纹" k="B" end="..." /></PushButton>
          <PushButton><Key t="选项" k="O" end="..." /></PushButton>
        </ButtonRow>
      </Panel>
      <ButtonRow $top={12}>
        <PushButton>确定</PushButton>
        <PushButton>取消</PushButton>
      </ButtonRow>
    </DialogBody>
  </Dialog>
);

const BordersDialog = () => (
  <Dialog $x={777} $y={236} $w={545} $front role="dialog" aria-label="边框和底纹">
    <DialogBar $front>
      <DialogTitle>边框和底纹</DialogTitle>
      <BarButton>?</BarButton>
      <BarButton aria-label="关闭"><Cross size={11} /></BarButton>
    </DialogBar>
    <DialogBody>
      <DialogTabs role="tablist">
        <DialogTab $w={60} $on role="tab"><Key t="边框" k="B" /></DialogTab>
        <DialogTab $w={79} role="tab"><Key t="页面边框" k="P" /></DialogTab>
        <DialogTab $w={55} role="tab"><Key t="底纹" k="S" /></DialogTab>
      </DialogTabs>
      <Panel $cols>
        <SettingColumn>
          设置:
          <SettingList>
            {[["无", "N"], ["方框", "X"], ["全部", "A"], ["虚框", "D"], ["自定义", "U"]].map(([t, k], i) => (
              <Setting key={k}>
                <HiddenRadio type="radio" name="setting" defaultChecked={i === 2} />
                <Tile $on={i === 2}><SettingTile kind={i} /></Tile>
                <span><Key t={t} k={k} /></span>
              </Setting>
            ))}
          </SettingList>
        </SettingColumn>
        <StyleColumn>
          <span><Key t="样式" k="Y" end=":" /></span>
          <StyleList>
            <StyleItems role="listbox" aria-label="样式">
              {styleDashes.map((d, i) => (
                <StyleItem key={i} $on={i === 0} role="option">
                  <svg width="102" height="1" viewBox="0 0 102 1"><path d="M0 .5h102" stroke="#000" strokeDasharray={d} /></svg>
                </StyleItem>
              ))}
            </StyleItems>
            <ScrollBar>
              <button aria-label="向上"><Chevron up bold /></button>
              <ScrollThumb />
              <button aria-label="向下"><Chevron bold /></button>
            </ScrollBar>
          </StyleList>
          <FieldName htmlFor="color"><Key t="颜色" k="C" end=":" /></FieldName>
          <CenteredDrop $h={26}>
            <select id="color"><option>自动</option></select>
            <DropArrow><Chevron /></DropArrow>
          </CenteredDrop>
          <FieldName $gap htmlFor="width"><Key t="宽度" k="W" end=":" /></FieldName>
          <WidthDrop $h={40}>
            <select id="width" defaultValue="0.5">{widths.map(([w]) => <option key={w} value={w}>{w} 磅</option>)}</select>
            <WidthLine />
            <DropArrow $hot><Chevron /></DropArrow>
            <WidthList role="listbox" aria-label="宽度">
              {widths.map(([w, t], i) => <WidthOption key={w} $on={i === 1} role="option"><span>{w} 磅</span><Stroke $t={t} /></WidthOption>)}
            </WidthList>
          </WidthDrop>
        </StyleColumn>
        <PreviewColumn>
          <Legend>预览</Legend>
          <Hint>单击下方图示或使用按钮可<br />应用边框</Hint>
          <PreviewRow>
            <SideButtons><Edge kind="top" /><Edge kind="midH" /><Edge kind="bottom" /></SideButtons>
            <Preview />
          </PreviewRow>
          <BottomButtons>
            <Edge kind="up" />
            <MiddleButtons><Edge kind="left" /><Edge kind="midV" /><Edge kind="right" /></MiddleButtons>
            <Edge kind="down" />
          </BottomButtons>
          <FieldName htmlFor="apply"><Key t="应用于" k="L" end=":" /></FieldName>
          <DropBox $h={28}><select id="apply"><option>表格</option></select><DropArrow><Chevron /></DropArrow></DropBox>
          <ButtonRow $top={6}><PushButton disabled>选项(O)...</PushButton></ButtonRow>
        </PreviewColumn>
      </Panel>
      <ButtonRow $top={12}>
        <PushButton $main>确定</PushButton>
        <PushButton>取消</PushButton>
      </ButtonRow>
    </DialogBody>
  </Dialog>
);

export default function App() {
  return (
    <>
      <GlobalStyle />
      <Shell>
        <Header>
          <DocTitle>Word教程2.docx - Word</DocTitle>
          <DocTitle $ctx>表格工具</DocTitle>
          <WindowButtons>
            <button aria-label="功能区显示选项"><svg width="16" height="11" viewBox="0 0 16 11"><path d="M.5.5h12v10H.5zM0 2.500h13M6.500 9V5M4.500 6.500l2-2l2 2" fill="none" stroke="currentColor" /></svg></button>
            <button aria-label="最小化"><svg width="16" height="10" viewBox="0 0 16 10"><path d="M4 7h9" stroke="currentColor" strokeWidth="2" /></svg></button>
            <button aria-label="最大化"><svg width="16" height="10" viewBox="0 0 16 10"><path d="M3.500.5h9v9h-9zM3 1.500h10" fill="none" stroke="currentColor" /></svg></button>
            <button aria-label="关闭"><svg width="16" height="10" viewBox="0 0 16 10"><path d="M4 .5l9 9M13 .5l-9 9" stroke="currentColor" strokeWidth="2" /></svg></button>
          </WindowButtons>
          <TabStrip>
            <RibbonTab $file>文件</RibbonTab>
            {mainTabs.map((t) => <RibbonTab key={t}>{t}</RibbonTab>)}
          </TabStrip>
          <TabStrip $ctx>
            <RibbonTab>设计</RibbonTab>
            <RibbonTab $active>布局</RibbonTab>
          </TabStrip>
          <TabRight>
            <TellMe>
              <svg width="12" height="16" viewBox="0 0 12 16"><path d="M4 11Q4 9 2.500 7.500Q.5 4.500 2.500 2.200Q6-.7 9.500 2.200Q11.500 4.500 9.500 7.500Q8 9 8 11zM4 13h4M5 15h2" fill="none" stroke="currentColor" strokeWidth="1.200" /></svg>
              告诉我您想要做什么...
            </TellMe>
            <SignIn>登录</SignIn>
            <Share>
              <svg width="15" height="17" viewBox="0 0 15 17"><circle cx="7" cy="5.500" r="4" fill="none" stroke="#fff" strokeWidth="1.500" /><path d="M1 16Q1 11 5 9.500M8 13h6.500M11.300 9.500V16" stroke="#fff" strokeWidth="1.500" fill="none" /></svg>
              共享
            </Share>
          </TabRight>
        </Header>

        <Ribbon>
          <RibbonGroup w={134} name="表">
            <BigTool w={40} icon="select" label={["选择"]} drop />
            <BigTool w={44} icon="gridlines" label={["查看", "网格线"]} />
            <BigTool w={40} icon="props" label={["属性"]} />
          </RibbonGroup>
          <RibbonGroup w={104} name="绘图">
            <BigTool w={52} icon="draw" label={["绘制表格"]} />
            <BigTool w={44} icon="eraser" label={["橡皮擦"]} />
          </RibbonGroup>
          <RibbonGroup w={320} name="行和列" launcher>
            <BigTool w={42} icon="remove" label={["删除"]} drop />
            <InnerRule />
            <BigTool w={65} icon="above" label={["在上方插入"]} />
            <BigTool w={65} icon="below" label={["在下方插入"]} />
            <BigTool w={65} icon="left" label={["在左侧插入"]} />
            <BigTool w={65} icon="right" label={["在右侧插入"]} />
          </RibbonGroup>
          <RibbonGroup w={146} name="合并">
            <BigTool w={42} icon="merge" label={["合并", "单元格"]} />
            <BigTool w={42} icon="split" label={["拆分", "单元格"]} />
            <BigTool w={52} icon="splitTable" label={["拆分表格"]} />
          </RibbonGroup>
          <RibbonGroup w={278} name="单元格大小" launcher>
            <BigTool w={52} icon="autofit" label={["自动调整"]} drop />
            <InnerRule />
            <SizeColumn>
              <SizeRow>
                <svg width="17" height="17" viewBox="0 0 17 17"><path d="M3.500 1v5M3.500 11v5M1 3.500l2.500-3l2.500 3M1 13.500l2.500 3l2.500-3" stroke={ICON_BLUE} strokeWidth="1.400" fill="none" /><path d="M2 7h3v3H2zM12.500 1.500h4v14h-4z" fill="none" stroke={ICON_GREY} /><path d="M7 1.500h5M7 15.500h5M9.500 2v13" stroke={ICON_GREY} strokeDasharray="1 1" /></svg>
                <SizeLabel htmlFor="cell-h">高度:</SizeLabel>
                <Spin id="cell-h" value="1.42 厘米" w={79} h={23} flat />
              </SizeRow>
              <SizeRow>
                <svg width="17" height="17" viewBox="0 0 17 17"><path d="M.5 1.500h15v4H.5zM6.500 12h3v3h-3z" fill="none" stroke={ICON_GREY} /><path d="M.5 6v5M15.500 6v5" stroke={ICON_GREY} strokeDasharray="1 1" /><path d="M1 13.500h4M11 13.500h5M3.500 11l-3 2.500l3 2.500M13.500 11l3 2.500l-3 2.500" stroke={ICON_BLUE} strokeWidth="1.400" fill="none" /></svg>
                <SizeLabel htmlFor="cell-w">宽度:</SizeLabel>
                <Spin id="cell-w" value="2.98 厘米" w={79} h={23} flat />
              </SizeRow>
            </SizeColumn>
            <InnerRule />
            <SizeColumn>
              <PlainButton>
                <svg width="17" height="16" viewBox="0 0 17 16"><path d="M1.500 2.500h7v12h-7zM1.500 8.500h7M8.500 2.500v12" fill="#fff" stroke={ICON_GREY} /><path d="M10 2.500h6M10 8.500h6M10 14.500h6M13.500 1v15" stroke={ICON_BLUE} /></svg>
                分布行
              </PlainButton>
              <PlainButton>
                <svg width="17" height="16" viewBox="0 0 17 16"><path d="M2.500 8.500h12v7h-12zM8.500 8.500v7" fill="#fff" stroke={ICON_GREY} /><path d="M1 3.500h15M2.500 0v7M8.500 0v7M14.500 0v7" stroke={ICON_BLUE} /></svg>
                分布列
              </PlainButton>
            </SizeColumn>
          </RibbonGroup>
          <RibbonGroup w={170} name="对齐方式">
            <AlignGrid>
              {[0, 1, 2].map((r) => [0, 1, 2].map((c) => <AlignCell key={`${r}${c}`} $on={r === 1 && c === 1} aria-label="对齐"><AlignIcon row={r} col={c} /></AlignCell>))}
            </AlignGrid>
            <BigTool w={52} icon="direction" label={["文字方向"]} />
            <BigTool w={44} icon="margins" label={["单元格", "边距"]} />
          </RibbonGroup>
          <RibbonGroup w={223} name="数据">
            <BigTool w={42} icon="sort" label={["排序"]} />
            <BigTool w={64} icon="headings" label={["重复标题行"]} />
            <BigTool w={66} icon="toText" label={["转换为文本"]} />
            <BigTool w={42} icon="formula" label={["公式"]} />
          </RibbonGroup>
          <RibbonEnd><button aria-label="折叠功能区"><Chevron up bold /></button></RibbonEnd>
        </Ribbon>

        <QuickBar>
          <QuickButton $first aria-label="保存"><svg width="14" height="14" viewBox="0 0 14 14"><path d="M0 0h14v14H0z" fill="#8a52ae" /><path d="M2 1h10v6H2zM4 10h6v4H4z" fill="#fff" /><path d="M5 11h2v3H5z" fill="#8a52ae" /></svg></QuickButton>
          <QuickButton $split aria-label="撤消">
            <svg width="30" height="14" viewBox="0 0 30 14"><path d="M3 4.500H9Q14 4.500 14 8.500Q14 12.500 9 13" fill="none" stroke={ICON_BLUE} strokeWidth="2.200" /><path d="M6 0L1.500 4.500L6 9" fill="none" stroke={ICON_BLUE} strokeWidth="2.200" /><path d="M24 5.500h5l-2.500 3z" fill="#666" /></svg>
          </QuickButton>
          <QuickButton aria-label="重复"><svg width="14" height="14" viewBox="0 0 14 14"><path d="M4.500 2.200A5.500 5.500 0 1 0 10.500 3M8 6V1H13" fill="none" stroke="#b0b0b0" strokeWidth="2" /></svg></QuickButton>
          <QuickButton aria-label="双页"><svg width="17" height="12" viewBox="0 0 17 12"><path d="M.5.500h6v11h-6zM10.500.5h6v11h-6z" fill="#fff" stroke={ICON_GREY} /><path d="M2 3.500h3M2 6h3M2 8.500h3M12 3.500h3M12 6h3M12 8.500h3" stroke={ICON_GREY} /></svg></QuickButton>
          <QuickButton aria-label="链接"><svg width="17" height="18" viewBox="0 0 17 18"><g fill="none" stroke="#a6a6a6"><circle cx="6.500" cy="6" r="5.500" /><ellipse cx="6.500" cy="6" rx="2.500" ry="5.500" /><path d="M1 6h11M2 3h9" /></g><path d="M4 11h6v4H4zM9 11h6v4H9z" fill="none" stroke="#e6e6e6" strokeWidth="4" /><rect x="2.500" y="11" width="6" height="5" rx="2.500" fill="none" stroke="#a0a0a0" strokeWidth="1.800" /><rect x="9.500" y="11" width="6" height="5" rx="2.500" fill="none" stroke="#a0a0a0" strokeWidth="1.800" /><path d="M7 13.500h4" stroke="#a0a0a0" strokeWidth="1.500" /></svg></QuickButton>
          <QuickButton aria-label="打印预览"><svg width="15" height="16" viewBox="0 0 15 16"><path d="M1.500.500h8l3 3v12H1.500z" fill="#fff" stroke={ICON_GREY} /><circle cx="7.500" cy="8" r="3.500" fill="#fff" stroke={ICON_GREY} strokeWidth="1.800" /><path d="M10 10.500l4.500 4.500" stroke={ICON_GREY} strokeWidth="2.200" /></svg></QuickButton>
          <QuickButton aria-label="邮件附件"><svg width="17" height="15" viewBox="0 0 17 15"><path d="M2 4.500H.5v10h15v-10H10" fill="#fff" stroke={ICON_GREY} /><path d="M3.500 3v5q0 2.500 2 2.500t2-2.500V2.500q0-2-1.500-2T5 2v5M9.500 2v6" fill="none" stroke={ICON_GREY} /><path d="M12 7h2v2h-2z" fill={ICON_BLUE} /></svg></QuickButton>
          <QuickButton aria-label="转换"><svg width="17" height="16" viewBox="0 0 17 16"><path d="M8.500.500h8v6h-8zM.5 7.500h4l2 2v6h-6z" fill="#fff" stroke={ICON_GREY} /><path d="M10 2.500h5M10 4.500h5" stroke={ICON_GREY} /><path d="M2 2.500h3v3M3 5l2 2l2-2" fill="none" stroke={ICON_BLUE} strokeWidth="1.300" /></svg></QuickButton>
          <QuickButton aria-label="自定义"><Tri color="#f5f5f5" /></QuickButton>
        </QuickBar>

        <Work>
          <NavPane>
            <NavHead>
              <NavTitle>导航</NavTitle>
              <button aria-label="选项"><Tri w={9} /></button>
              <button aria-label="关闭"><Cross color="#666" width={2} /></button>
            </NavHead>
            <SearchBox>
              <input placeholder="搜索文档" aria-label="搜索文档" />
              <svg width="15" height="14" viewBox="0 0 15 14"><circle cx="9" cy="5.500" r="4.500" fill="none" stroke={BLUE} strokeWidth="1.800" /><path d="M5.500 8.500L1 13" stroke={BLUE} strokeWidth="2.200" /></svg>
              <Tri />
            </SearchBox>
            <NavTabs><NavTab>标题</NavTab><NavTab $on>页面</NavTab><NavTab>结果</NavTab></NavTabs>
            <ThumbView>
              <ThumbList>
                {[7, 8, 9, 10].map((n) => (
                  <ThumbItem key={n} $on={n === 8}>
                    <button aria-label={`第 ${n} 页`}><svg width="113" height="161" viewBox="0 0 113 161">{thumbs[n]}<Foot /></svg></button>
                    {n}
                  </ThumbItem>
                ))}
              </ThumbList>
            </ThumbView>
          </NavPane>
          <RulerColumn>
            <TabSelector aria-label="制表符"><svg width="8" height="8" viewBox="0 0 8 8"><path d="M1 0v7h7" fill="none" stroke="#666" strokeWidth="2" /></svg></TabSelector>
            <VRulerBox><VRuler /></VRulerBox>
          </RulerColumn>
          <DocArea>
            <HRuler />
            <Page>
              <DocTable>
                <tbody>
                  {[["1", "郑某", "", "20"], ["2", "杨某", "", "20"], ["3", "", "", ""], ["4", "", "", ""], ["5", "", "", ""]].map((r) => (
                    <tr key={r[0]}>{r.map((c, i) => <td key={i}>{c}</td>)}</tr>
                  ))}
                </tbody>
              </DocTable>
              <Caption>图表  2   B 组成员信息</Caption>
            </Page>
          </DocArea>
        </Work>

        <StatusBar>
          <StatusItems>
            <span>页面: 8</span><span>节: 4</span><span>第 8 页， 共 10 页</span><span>33/2410 个字</span><span>中文(中国)</span><span>修订: 关闭</span><span>插入</span>
            <svg width="13" height="18" viewBox="0 0 13 18"><path d="M.5 5.500h11v9H.5zM0 7.500h12M3 10h1M6 10h1M9 10h1M3 12.500h1M6 12.500h1M9 12.500h1" fill="none" stroke={ICON_GREY} /><circle cx="3" cy="5" r="2.500" fill="#666" /></svg>
          </StatusItems>
          <ViewButton aria-label="阅读视图"><svg width="13" height="13" viewBox="0 0 13 13"><path d="M.5 1.500h5l1 1l1-1h5v10h-5l-1 1l-1-1h-5zM6.500 2v10M2 4h3M2 6h3M2 8h3M8 4h3M8 6h3M8 8h3M2 10h3M8 10h3" fill="none" stroke="#666" /></svg></ViewButton>
          <ViewButton $on aria-label="页面视图"><svg width="14" height="13" viewBox="0 0 14 13"><path d="M.5.5h13v12H.5zM2 3.500h10M2 5.500h10M2 7.500h10M2 9.500h10" fill="none" stroke="#555" /></svg></ViewButton>
          <ViewButton aria-label="Web 版式"><svg width="14" height="13" viewBox="0 0 14 13"><path d="M5 11.500H.5v-11h11V5M2 3h8M2 5h5M2 7h3" fill="none" stroke="#666" /><circle cx="10" cy="9" r="3.500" fill="#666" /><path d="M8 8l2 1l1 2" stroke="#f1f1f1" fill="none" /></svg></ViewButton>
          <ZoomButton aria-label="缩小"><svg width="8" height="8" viewBox="0 0 8 8"><path d="M1 4h6" stroke="#555" strokeWidth="2" /></svg></ZoomButton>
          <ZoomRange type="range" min="0" max="100" defaultValue="46" aria-label="显示比例" />
          <ZoomButton aria-label="放大"><svg width="8" height="8" viewBox="0 0 8 8"><path d="M0 4h8M4 0v8" stroke="#555" strokeWidth="2" /></svg></ZoomButton>
          <ZoomValue>90%</ZoomValue>
        </StatusBar>

        <TableProperties />
        <BordersDialog />

        <Marks width="1340" height="720" viewBox="0 0 1340 720">
          <defs><filter id="drop" x="-30%" y="-30%" width="160%" height="160%"><feDropShadow dx="2" dy="3" stdDeviation="2" floodColor="#000" floodOpacity=".5" /></filter></defs>
          {arrows.map((p) => <RedArrow key={p.join()} p={p} />)}
          <path d="M1051.500 616v16.500l4-3.500l3 6l3-1.500l-3-5.500h5z" fill="#fff" stroke="#223" />
        </Marks>

        <Watermark>
          <svg width="43" height="44" viewBox="0 0 43 44">
            <defs>
              <linearGradient id="swirlA" x1="0" y1="1" x2="1" y2="0"><stop offset="0" stopColor="#3f6fc4" /><stop offset="1" stopColor="#4fd0f0" /></linearGradient>
              <linearGradient id="swirlB" x1="0" y1="1" x2="1" y2="0"><stop offset="0" stopColor="#f2e34a" /><stop offset="1" stopColor="#3fb86a" /></linearGradient>
            </defs>
            <path d="M43 1Q20 2 8 14Q-3 25 2 36Q3 24 16 15Q30 7 43 1z" fill="url(#swirlA)" />
            <path d="M26 16Q42 12 41 22Q38 36 18 41Q8 43 4 39Q18 41 28 32Q36 24 32 18Q29 16 26 16z" fill="url(#swirlB)" />
            <path d="M34 8Q12 14 8 27Q6 36 14 35Q24 33 25 26Q24 22 18 24Q22 25 20 28Q15 33 12 29Q11 18 34 8z" fill="url(#swirlA)" />
          </svg>
          <WatermarkText>极光下载站<WatermarkSite>www.xz7.com</WatermarkSite></WatermarkText>
        </Watermark>
      </Shell>
    </>
  );
}
